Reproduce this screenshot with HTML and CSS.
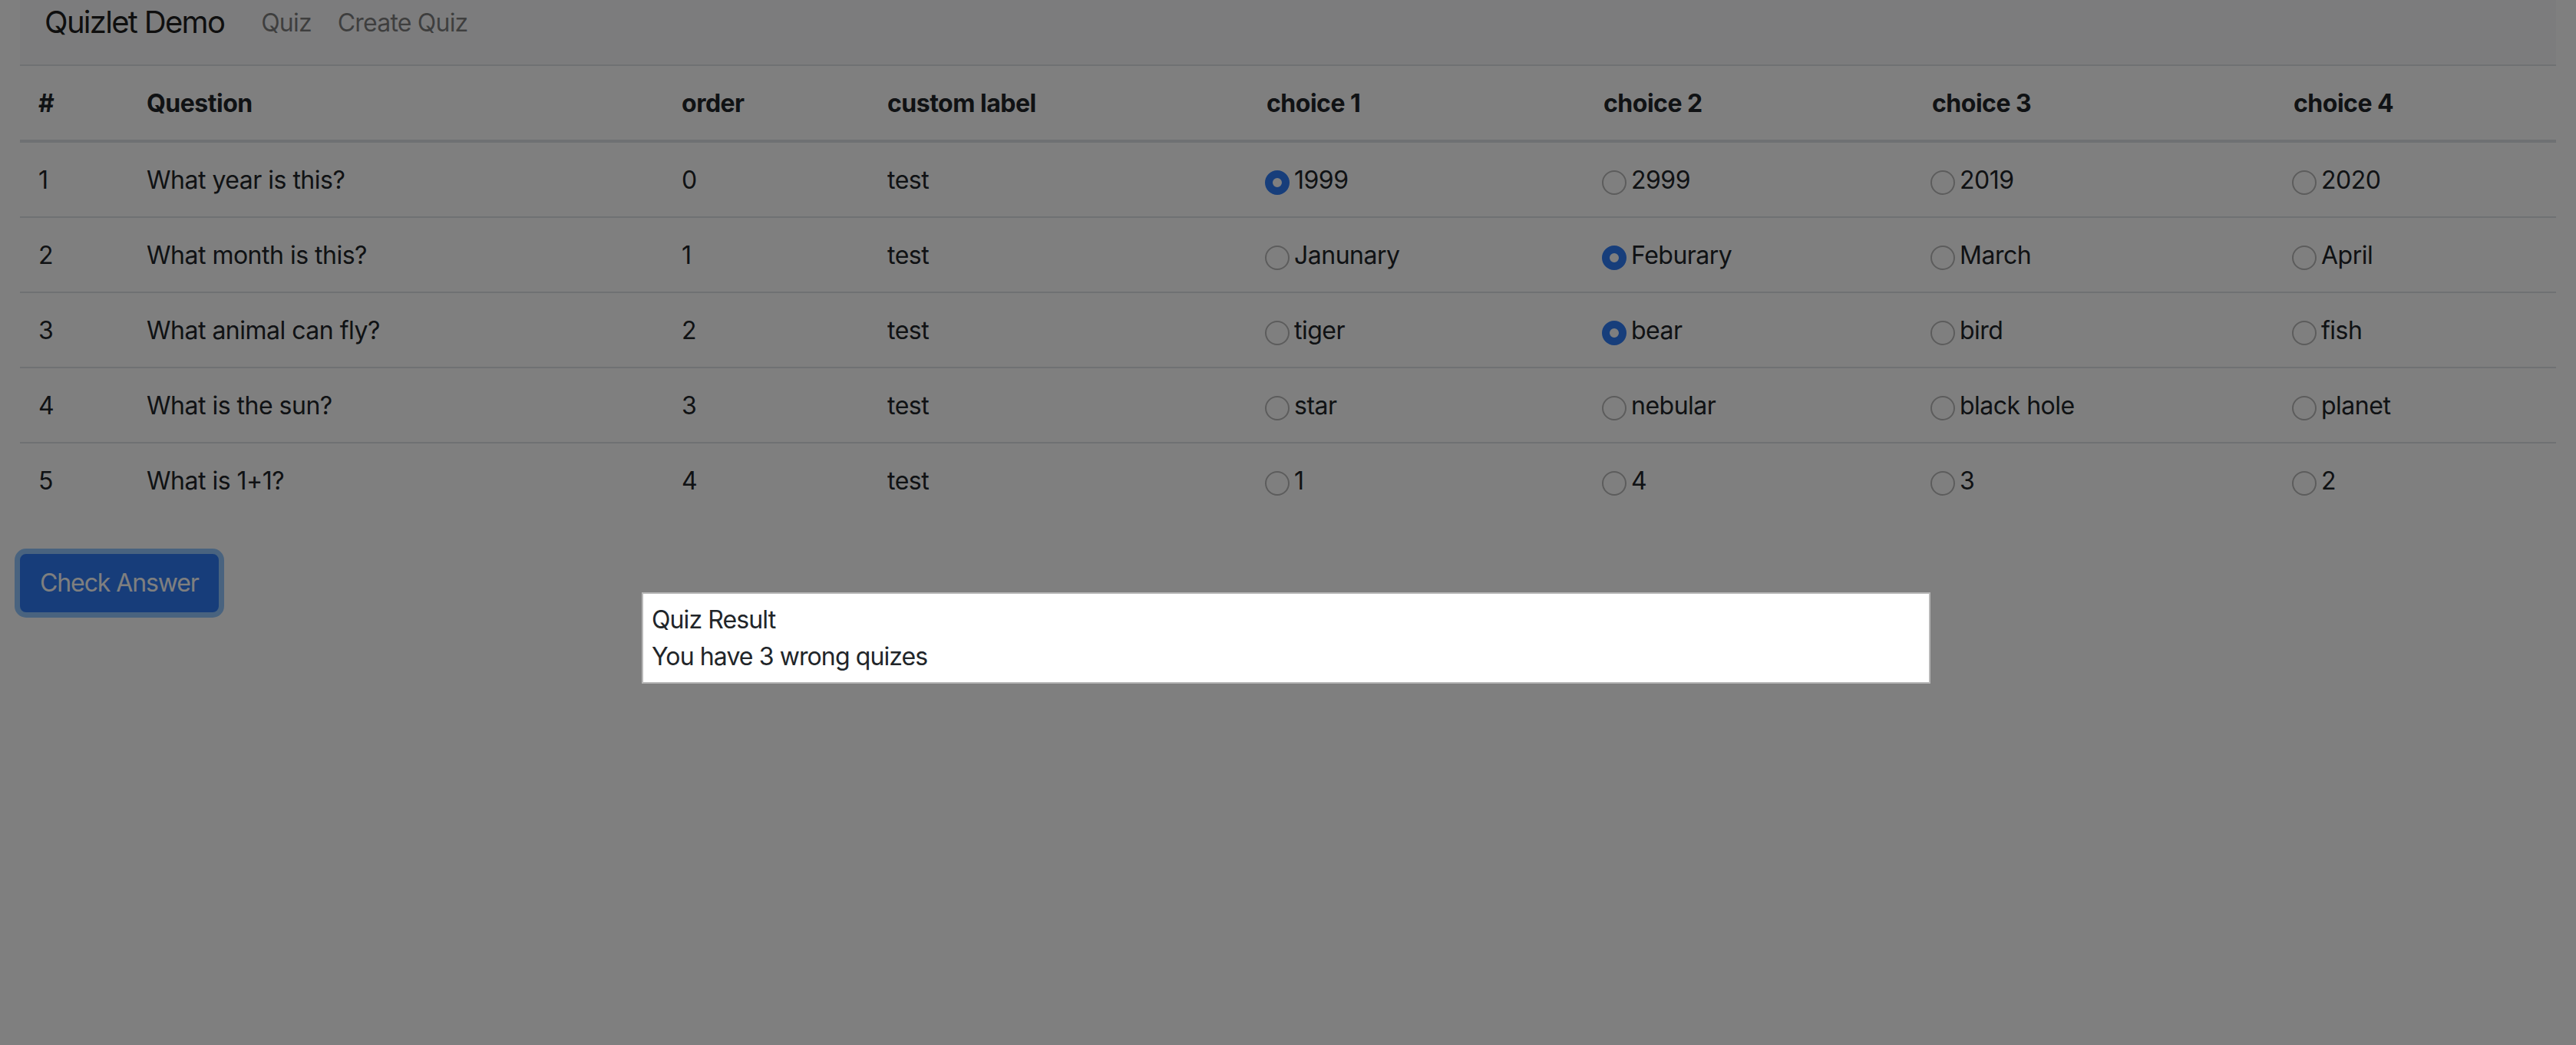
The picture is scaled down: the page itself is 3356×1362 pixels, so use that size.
FILE: index.html
```html
<!DOCTYPE html>
<html lang="en">
<head>
<meta charset="utf-8">
<title>Quizlet Demo</title>
<link rel="stylesheet" href="styles.css">
</head>
<body>
<div class="page">
  <nav class="navbar">
    <a class="brand" href="#">Quizlet Demo</a>
    <a class="nav-link" href="#">Quiz</a>
    <a class="nav-link" href="#">Create Quiz</a>
  </nav>

  <table class="quiz-table">
    <thead>
      <tr>
        <th class="c-num">#</th>
        <th class="c-q">Question</th>
        <th class="c-order">order</th>
        <th class="c-label">custom label</th>
        <th class="c-ch1">choice 1</th>
        <th class="c-ch2">choice 2</th>
        <th class="c-ch3">choice 3</th>
        <th class="c-ch4">choice 4</th>
      </tr>
    </thead>
    <tbody>
      <tr>
        <td>1</td><td>What year is this?</td><td>0</td><td>test</td>
        <td><label><input type="radio" name="q1" checked>1999</label></td>
        <td><label><input type="radio" name="q1">2999</label></td>
        <td><label><input type="radio" name="q1">2019</label></td>
        <td><label><input type="radio" name="q1">2020</label></td>
      </tr>
      <tr>
        <td>2</td><td>What month is this?</td><td>1</td><td>test</td>
        <td><label><input type="radio" name="q2">Janunary</label></td>
        <td><label><input type="radio" name="q2" checked>Feburary</label></td>
        <td><label><input type="radio" name="q2">March</label></td>
        <td><label><input type="radio" name="q2">April</label></td>
      </tr>
      <tr>
        <td>3</td><td>What animal can fly?</td><td>2</td><td>test</td>
        <td><label><input type="radio" name="q3">tiger</label></td>
        <td><label><input type="radio" name="q3" checked>bear</label></td>
        <td><label><input type="radio" name="q3">bird</label></td>
        <td><label><input type="radio" name="q3">fish</label></td>
      </tr>
      <tr>
        <td>4</td><td>What is the sun?</td><td>3</td><td>test</td>
        <td><label><input type="radio" name="q4">star</label></td>
        <td><label><input type="radio" name="q4">nebular</label></td>
        <td><label><input type="radio" name="q4">black hole</label></td>
        <td><label><input type="radio" name="q4">planet</label></td>
      </tr>
      <tr>
        <td>5</td><td>What is 1+1?</td><td>4</td><td>test</td>
        <td><label><input type="radio" name="q5">1</label></td>
        <td><label><input type="radio" name="q5">4</label></td>
        <td><label><input type="radio" name="q5">3</label></td>
        <td><label><input type="radio" name="q5">2</label></td>
      </tr>
    </tbody>
  </table>

  <button class="btn-primary" type="button">Check Answer</button>
</div>

<div class="backdrop"></div>

<div class="result-modal">
  <div>Quiz Result</div>
  <div>You have 3 wrong quizes</div>
</div>
</body>
</html>
```

FILE: styles.css
```css
* {
  box-sizing: border-box;
}

html, body {
  margin: 0;
  padding: 0;
  height: 100%;
}

body {
  background: #ffffff;
  color: #212529;
  font-family: Inter, "Liberation Sans", sans-serif;
  font-size: 32px;
  line-height: 48px;
  overflow: hidden;
}

.page {
  padding: 0 26px;
}

.navbar {
  display: flex;
  align-items: flex-start;
  height: 84px;
  padding: 0 32px;
  background: #f8f9fa;
}

.brand {
  font-size: 40px;
  line-height: 58px;
  color: rgba(0, 0, 0, 0.9);
  text-decoration: none;
  margin-right: 32px;
  letter-spacing: -1.7px;
}

.nav-link {
  padding: 6px 16px 0;
  color: rgba(0, 0, 0, 0.5);
  text-decoration: none;
  letter-spacing: -0.8px;
}

.nav-link + .nav-link {
  padding-left: 18px;
}

.quiz-table {
  width: 100%;
  border-collapse: collapse;
  table-layout: fixed;
  letter-spacing: -0.5px;
}

.quiz-table th,
.quiz-table td {
  text-align: left;
  padding: 25px 24px 23px;
  border-top: 2px solid #dee2e6;
  vertical-align: top;
  white-space: nowrap;
}

.quiz-table th {
  font-weight: 700;
  vertical-align: bottom;
  border-bottom: 4px solid #dee2e6;
}

.c-num { width: 141px; }
.c-q { width: 697px; }
.c-order { width: 268px; }
.c-label { width: 494px; }
.c-ch1 { width: 439px; }
.c-ch2 { width: 428px; }
.c-ch3 { width: 471px; }
.c-ch4 { width: 366px; }

.quiz-table label {
  display: inline-block;
}

.quiz-table input[type="radio"] {
  -webkit-appearance: none;
  appearance: none;
  display: inline-block;
  width: 32px;
  height: 32px;
  margin: 0 6px 0 -2px;
  border-radius: 50%;
  border: 2px solid #b9b9b9;
  background: #ffffff;
  vertical-align: -8px;
}

.quiz-table input[type="radio"]:checked {
  border: 10px solid #2f7cf6;
  background: #ffffff;
}

.btn-primary {
  display: inline-block;
  margin-top: 48px;
  padding: 12px 24px;
  font-family: inherit;
  font-size: 32px;
  line-height: 48px;
  letter-spacing: -1.1px;
  color: #ffffff;
  background: #2e7af4;
  border: 2px solid #2e7af4;
  border-radius: 8px;
  box-shadow: 0 0 0 7px rgba(38, 143, 255, 0.5);
}

.backdrop {
  position: fixed;
  inset: 0;
  background: rgba(0, 0, 0, 0.5);
}

.result-modal {
  position: absolute;
  top: 772px;
  left: 836px;
  width: 1679px;
  padding: 10px 11px 9px;
  background: #ffffff;
  border: 2px solid #b8b8b8;
  color: #212529;
  letter-spacing: -0.9px;
}
```
